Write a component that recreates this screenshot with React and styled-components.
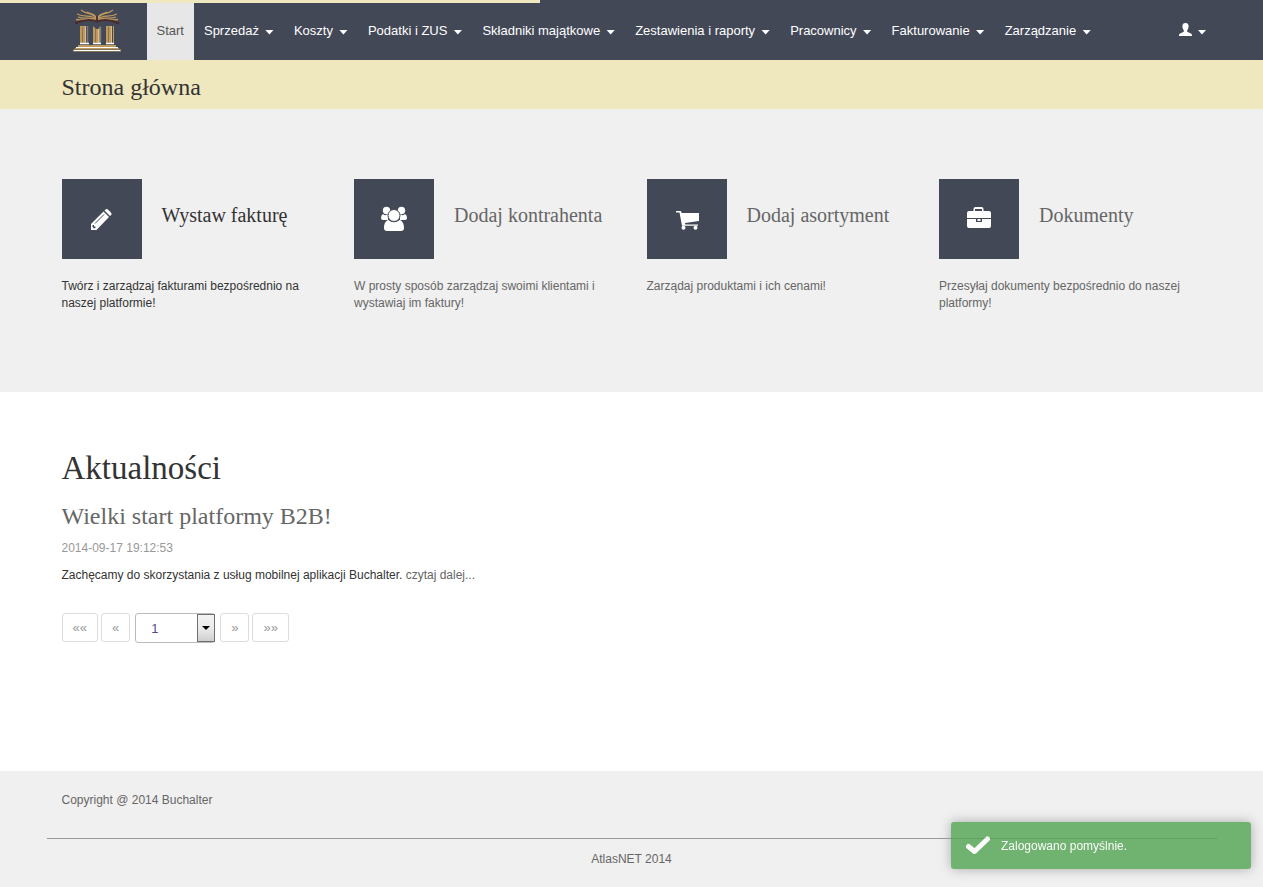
import React from "react";
import styled, { createGlobalStyle } from "styled-components";

const GlobalStyle = createGlobalStyle`
  * {
    box-sizing: border-box;
  }

  body {
    margin: 0;
    background-color: #fff;
    color: #333;
    font-family: "Liberation Sans", Arial, sans-serif;
    font-size: 12px;
    line-height: 17px;
  }

  a {
    color: #666;
    text-decoration: none;
  }
`;

const serif = `Georgia, "Liberation Serif", serif`;

const Page = styled.div`
  display: flex;
  flex-direction: column;
  min-height: 100vh;
`;

const Container = styled.div`
  width: 100%;
  max-width: 1170px;
  margin: 0 auto;
  padding: 0 15px;
`;

const LoadingBar = styled.div`
  position: absolute;
  top: 0;
  left: 0;
  width: 540px;
  max-width: 100%;
  height: 3px;
  background-color: #efe7be;
`;

const Header = styled.header`
  background-color: #434857;
`;

const HeaderInner = styled(Container)`
  display: flex;
  flex-wrap: wrap;
  padding: 0;
`;

const Brand = styled.a`
  display: flex;
  width: 100px;
  height: 60px;
  padding: 9px 0 0 26px;
`;

const Nav = styled.nav`
  display: flex;
  flex-wrap: wrap;
  flex: 1;
`;

const NavLink = styled.a`
  display: flex;
  align-items: center;
  gap: 6px;
  height: 60px;
  padding: 0 10px;
  font-size: 13px;
  color: ${(props) => (props.$active ? "#555" : "#fff")};
  background-color: ${(props) => (props.$active ? "#e7e7e7" : "transparent")};
`;

const Caret = styled.span`
  width: 9px;
  height: 5px;
  margin-top: 4px;
  background-color: #fff;
  clip-path: polygon(0 0, 100% 0, 50% 100%);
`;

const TitleBar = styled.div`
  padding: 12px 0 7px;
  background-color: #efe7be;
`;

const Title = styled.h1`
  margin: 0;
  font-family: ${serif};
  font-size: 24px;
  font-weight: 400;
  line-height: 30px;
`;

const Features = styled.section`
  padding: 70px 0 80px;
  background-color: #f0f0f0;
`;

const FeatureGrid = styled(Container)`
  display: grid;
  grid-template-columns: repeat(auto-fit, minmax(240px, 1fr));
  padding: 0;
`;

const Feature = styled.a`
  display: block;
  padding: 0 15px;
  color: ${(props) => (props.$active ? "#333" : "#666")};
`;

const FeatureHead = styled.div`
  display: flex;
  gap: 20px;
`;

const FeatureIcon = styled.span`
  display: flex;
  align-items: center;
  justify-content: center;
  flex: none;
  width: 80px;
  height: 80px;
  background-color: #434857;
`;

const FeatureTitle = styled.h2`
  margin: 24px 0 0;
  font-family: ${serif};
  font-size: 20px;
  font-weight: 400;
  line-height: 24px;
`;

const FeatureText = styled.p`
  min-height: 34px;
  margin: 19px 0 0;
`;

const News = styled.main`
  flex: 1;
  padding: 56px 0 128px;
`;

const NewsHeading = styled.h2`
  margin: 0;
  font-family: ${serif};
  font-size: 33px;
  font-weight: 400;
  line-height: 40px;
`;

const NewsTitle = styled.h3`
  margin: 13px 0 0;
  font-family: ${serif};
  font-size: 24px;
  font-weight: 400;
  line-height: 30px;
`;

const NewsDate = styled.p`
  margin: 9px 0 0;
  color: #999;
`;

const NewsText = styled.p`
  margin: 10px 0 0;
`;

const Pager = styled.div`
  display: flex;
  gap: 3px;
  margin-top: 29px;
`;

const PagerButton = styled.button`
  height: 29px;
  padding: 0 10px;
  border: 1px solid #ddd;
  border-radius: 3px;
  background-color: #fff;
  color: #999;
  font-family: inherit;
  font-size: 13px;
  cursor: pointer;
`;

const PageField = styled.label`
  position: relative;
  margin: 0 2px;
`;

const PageSelect = styled.select`
  display: block;
  appearance: none;
  width: 80px;
  height: 30px;
  padding: 0 20px 0 15px;
  border: 1px solid #bbb;
  border-radius: 3px;
  background-color: #fff;
  color: #5a4a8a;
  font-family: inherit;
  font-size: 13px;
`;

const SelectArrow = styled.span`
  position: absolute;
  top: 1px;
  right: 0;
  display: flex;
  align-items: center;
  justify-content: center;
  width: 18px;
  height: 28px;
  border: 1px solid #707070;
  background: linear-gradient(#f3f3f3, #ececec 50%, #cfcfcf);
  pointer-events: none;
`;

const Footer = styled.footer`
  padding-bottom: 19px;
  background-color: #f0f0f0;
  color: #666;
`;

const FooterInner = styled(Container)`
  padding: 0;
`;

const Copyright = styled.p`
  margin: 0;
  padding: 21px 15px 29px;
`;

const FooterNote = styled.p`
  margin: 0;
  padding-top: 12px;
  border-top: 1px solid #999;
  text-align: center;
`;

const Toast = styled.div`
  position: fixed;
  right: 12px;
  bottom: 18px;
  display: flex;
  align-items: center;
  gap: 10px;
  width: 300px;
  padding: 14px 15px 13px;
  border-radius: 3px;
  background-color: #51a351;
  box-shadow: 0 0 12px #999;
  color: #fff;
  opacity: 0.8;
`;

function Logo() {
  return (
    <svg width="48" height="43" viewBox="0 0 48 43" fill="none" aria-hidden="true">
      {/* open book */}
      <g stroke="#bd995d" strokeWidth="1.3">
        <path d="M23 9C19 3 14 6 8 1M23 8C20 4 17 5 14 3M23 10C18 5 12 9 4 5M23 11C17 7 12 11 5 8M23 12C16 9 11 12 3 10.500" />
        <path d="M25 9C29 3 34 6 40 1M25 8C28 4 31 5 34 3M25 10C30 5 36 9 44 5M25 11C31 7 36 11 43 8M25 12C32 9 37 12 45 10.500" />
      </g>
      <path d="M2 14.500L7 12.500Q17 9.500 24 12.500Q31 9.500 41 12.500L46 14.500" stroke="#4b2a2c" strokeWidth="2" />
      <path d="M24 7v6" stroke="#4b2a2c" strokeWidth="1.5" />
      {/* columns */}
      <path d="M7 17h6v18H7zM20 17l3 3h2l3-3v18h-8zM33 17h5v18h-5z" fill="#bd995d" />
      <path d="M9.500 18v16M22.500 20v14M35.500 18v16" stroke="#8b7352" />
      <path d="M12.500 17v17M25.500 20v14M38.500 17v17" stroke="#d9bd8c" />
      <path d="M14.500 17v17M27.500 18v16" stroke="#777984" strokeWidth="1.5" />
      <path d="M40.500 17v17" stroke="#bd995d" />
      <path d="M7 34.500h9M20 34.500h8M33 34.500h8" stroke="#fff" strokeWidth="1.5" />
      {/* steps */}
      <path d="M5 36h38v2H5z" fill="#bd995d" />
      <path d="M3 38.500h42" stroke="#fff" />
      <path d="M2 39.500h44" stroke="#bd995d" />
      <path d="M0 40.500h48v2H0z" fill="#bd995d" />
      <path d="M1 41.500h46" stroke="#fff" />
    </svg>
  );
}

function UserIcon() {
  return (
    <svg width="13" height="15" viewBox="0 0 13 15" fill="#fff" aria-hidden="true">
      <path d="M6.500 0C8.500 0 9.700 1.200 9.600 3.400C9.500 5.400 8.800 6.400 8.200 7.200C7.900 7.900 8.100 8.500 8.700 8.900L12 10.500C12.800 11 13 11.600 13 13H0C0 11.600.2 11 1 10.500L4.300 8.900C4.900 8.500 5.100 7.900 4.800 7.200C4.200 6.400 3.500 5.400 3.400 3.400C3.300 1.200 4.500 0 6.500 0Z" />
    </svg>
  );
}

function PencilIcon() {
  return (
    <svg width="26" height="26" viewBox="0 0 26 26" aria-hidden="true">
      <path d="M2 18L14.500 5.500l5.500 5.500L7.500 24H2z" fill="#fff" />
      <path d="M15.500 4.500l1-1q1.200-1 2.400 0l3.200 3.200q1 1.200 0 2.400L21 10z" fill="#fff" />
      <path d="M6 17.500L15 8.500" stroke="#434857" />
      <path d="M3.500 19l1.500 0v1.500h1.500v1.500L5 22.500l-1.500-1.500z" fill="#434857" />
    </svg>
  );
}

function GroupIcon() {
  return (
    <svg width="26" height="26" viewBox="0 0 26 26" fill="#fff" aria-hidden="true">
      <circle cx="5.500" cy="4.500" r="3.700" />
      <circle cx="20.500" cy="4.500" r="3.700" />
      <path d="M2 8c2 2 4 1 5 0v6H2q-2 0-2-2 0-3 2-4zM24 8c-2 2-4 1-5 0v6h5q2 0 2-2 0-3-2-4z" />
      <path d="M7.500 14c3.500 3 7.500 3 11 0 3 .5 4.500 4 4.500 8q0 3-3 3H6q-3 0-3-3c0-4 1.500-7.500 4.500-8z" />
      <circle cx="13" cy="9.500" r="6" stroke="#434857" />
    </svg>
  );
}

function CartIcon() {
  return (
    <svg width="24" height="24" viewBox="0 0 24 24" fill="#fff" aria-hidden="true">
      <path d="M1 4h4.800l1 2H24v8l-14 2 .3 1.500H23v1.300H7L4.500 5.500H1z" />
      <circle cx="8.500" cy="20.800" r="2" />
      <circle cx="20.500" cy="20.800" r="2" />
    </svg>
  );
}

function BriefcaseIcon() {
  return (
    <svg width="26" height="26" viewBox="0 0 26 26" fill="#fff" aria-hidden="true">
      <path d="M7.500 5V3q0-2 2-2h6q2 0 2 2v2h-1.500V3H9v2z" />
      <path d="M3 5h20q2 0 2 2v5H1V7q0-2 2-2zM1 13h9v3h6v-3h9v7q0 2-2 2H3q-2 0-2-2z" />
      <path d="M11.500 13h3v2h-3z" />
    </svg>
  );
}

function CheckIcon() {
  return (
    <svg width="25" height="20" viewBox="0 0 25 20" fill="none" aria-hidden="true">
      <path d="M2.500 10.500L8.500 15.500L21.500 3" stroke="#fff" strokeWidth="5" strokeLinecap="round" strokeLinejoin="round" />
    </svg>
  );
}

const menu = [
  "Sprzedaż",
  "Koszty",
  "Podatki i ZUS",
  "Składniki majątkowe",
  "Zestawienia i raporty",
  "Pracownicy",
  "Fakturowanie",
  "Zarządzanie",
];

const features = [
  { title: "Wystaw fakturę", text: "Twórz i zarządzaj fakturami bezpośrednio na naszej platformie!", Icon: PencilIcon, active: true },
  { title: "Dodaj kontrahenta", text: "W prosty sposób zarządzaj swoimi klientami i wystawiaj im faktury!", Icon: GroupIcon },
  { title: "Dodaj asortyment", text: "Zarządaj produktami i ich cenami!", Icon: CartIcon },
  { title: "Dokumenty", text: "Przesyłaj dokumenty bezpośrednio do naszej platformy!", Icon: BriefcaseIcon },
];

export default function App() {
  return (
    <Page>
      <GlobalStyle />
      <Header>
        <HeaderInner>
          <Brand href="#" aria-label="Buchalter">
            <Logo />
          </Brand>
          <Nav>
            <NavLink href="#" $active>Start</NavLink>
            {menu.map((label) => (
              <NavLink href="#" key={label}>
                {label}
                <Caret />
              </NavLink>
            ))}
          </Nav>
          <NavLink href="#" aria-label="Konto">
            <UserIcon />
            <Caret />
          </NavLink>
        </HeaderInner>
      </Header>
      <LoadingBar />
      <TitleBar>
        <Container>
          <Title>Strona główna</Title>
        </Container>
      </TitleBar>
      <Features>
        <FeatureGrid>
          {features.map(({ title, text, Icon, active }) => (
            <Feature href="#" key={title} $active={active}>
              <FeatureHead>
                <FeatureIcon>
                  <Icon />
                </FeatureIcon>
                <FeatureTitle>{title}</FeatureTitle>
              </FeatureHead>
              <FeatureText>{text}</FeatureText>
            </Feature>
          ))}
        </FeatureGrid>
      </Features>
      <News>
        <Container>
          <NewsHeading>Aktualności</NewsHeading>
          <NewsTitle>
            <a href="#">Wielki start platformy B2B!</a>
          </NewsTitle>
          <NewsDate>2014-09-17 19:12:53</NewsDate>
          <NewsText>
            Zachęcamy do skorzystania z usług mobilnej aplikacji Buchalter. <a href="#">czytaj dalej...</a>
          </NewsText>
          <Pager>
            <PagerButton type="button">««</PagerButton>
            <PagerButton type="button">«</PagerButton>
            <PageField>
              <PageSelect aria-label="Strona">
                <option>1</option>
              </PageSelect>
              <SelectArrow>
                <svg width="8" height="4" viewBox="0 0 8 4" aria-hidden="true">
                  <path d="M0 0h8L4 4z" />
                </svg>
              </SelectArrow>
            </PageField>
            <PagerButton type="button">»</PagerButton>
            <PagerButton type="button">»»</PagerButton>
          </Pager>
        </Container>
      </News>
      <Footer>
        <FooterInner>
          <Copyright>Copyright @ 2014 Buchalter</Copyright>
          <FooterNote>AtlasNET 2014</FooterNote>
        </FooterInner>
      </Footer>
      <Toast role="status">
        <CheckIcon />
        Zalogowano pomyślnie.
      </Toast>
    </Page>
  );
}
